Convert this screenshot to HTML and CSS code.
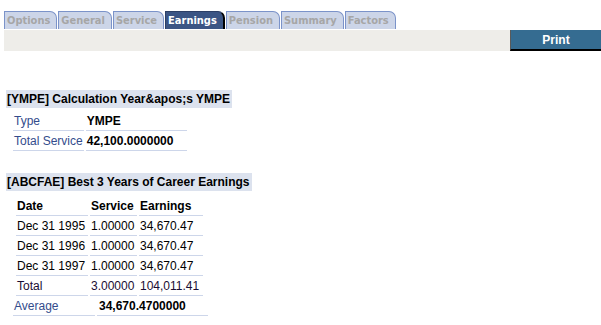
FILE: index.html
```html
<!DOCTYPE html>
<html lang="en">
<head>
    <meta name="viewport" content="width=device-width, initial-scale=1">
    <title>Earnings</title>
    <link rel="stylesheet" href="styles.css">
</head>
<body>

<div class="tabs">
    <span class="tab">Options</span>
    <span class="tab">General</span>
    <span class="tab">Service</span>
    <span class="tab active">Earnings</span>
    <span class="tab">Pension</span>
    <span class="tab">Summary</span>
    <span class="tab">Factors</span>
</div>

<div class="toolbar">
    <button class="print">Print</button>
</div>

<div class="content">
    <div class="section">
        <div class="section-title">[YMPE] Calculation Year&amp;apos;s YMPE</div>
        <table class="info">
            <tr><td class="label">Type</td><td class="value">YMPE</td></tr>
            <tr><td class="label">Total Service</td><td class="value">42,100.0000000</td></tr>
        </table>
    </div>

    <div class="section">
        <div class="section-title">[ABCFAE] Best 3 Years of Career Earnings</div>
        <table class="earnings">
            <tr class="head"><td class="c-date">Date</td><td class="c-svc">Service</td><td class="c-earn">Earnings</td></tr>
            <tr><td>Dec 31 1995</td><td>1.00000</td><td>34,670.47</td></tr>
            <tr><td>Dec 31 1996</td><td>1.00000</td><td>34,670.47</td></tr>
            <tr><td>Dec 31 1997</td><td>1.00000</td><td>34,670.47</td></tr>
            <tr class="total"><td>Total</td><td>3.00000</td><td>104,011.41</td></tr>
        </table>
        <table class="info average">
            <tr><td class="label">Average</td><td class="value">34,670.4700000</td></tr>
        </table>
    </div>
</div>

</body>
</html>
```

FILE: styles.css
```css
body {
    margin: 0;
    font-family: "Liberation Sans", Arial, sans-serif;
    font-size: 12px;
    color: #000;
    background: #fff;
}

.tabs {
    display: flex;
    gap: 1px;
    padding: 11px 0 0 4px;
    height: 29px;
    box-sizing: border-box;
    align-items: flex-end;
}

.tab {
    display: block;
    height: 18px;
    line-height: 17px;
    box-sizing: border-box;
    padding: 0 6px 0 2px;
    background-color: #ccd5e8;
    border: 1px solid #7b93c9;
    border-bottom: none;
    border-top-right-radius: 7px;
    color: #a6a6a6;
    font-family: "DejaVu Sans Condensed", "DejaVu Sans", sans-serif;
    font-weight: bold;
    font-size: 11px;
}

.tab.active {
    background-color: #3b5584;
    border-color: #2c3f66;
    border-right: 2px solid #000;
    color: #fff;
}

.toolbar {
    display: flex;
    justify-content: flex-end;
    margin: 1px 0 0 4px;
    height: 21px;
    background-color: #eeede9;
}

.print {
    width: 91px;
    height: 21px;
    box-sizing: border-box;
    padding: 0;
    background-color: #356c91;
    border: none;
    border-left: 1px solid #5a5a5a;
    border-bottom: 2px solid #000;
    color: #fff;
    font-family: "Liberation Sans", Arial, sans-serif;
    font-weight: bold;
    font-size: 12px;
}

.content {
    padding: 39px 0 0 6px;
}

.section {
    margin-bottom: 20px;
}

.section-title {
    display: inline-block;
    height: 18px;
    line-height: 18px;
    padding: 0 2px 0 1px;
    background-color: #dce2ee;
    font-weight: bold;
}

table {
    border-collapse: separate;
    border-spacing: 2px;
    font-size: 12px;
}

td {
    padding: 1px 1px 2px 1px;
    height: 14px;
    border-bottom: 1px solid #cdd6ea;
    white-space: nowrap;
}

.info {
    margin: 3px 0 0 5px;
}

.info .label {
    color: #334c8c;
    width: 68px;
}

.info .value {
    font-weight: bold;
    padding-right: 14px;
}

.earnings {
    margin: 5px 0 0 8px;
}

.earnings .head td {
    font-weight: bold;
}

.earnings .c-date {
    width: 70px;
}

.earnings .c-svc {
    width: 45px;
}

.earnings .c-earn {
    width: 62px;
}

.earnings .total td {
    color: #1a0d33;
}

.average {
    margin: -2px 0 0 5px;
}

.average .label {
    width: 80px;
}

.average .value {
    width: 95px;
    padding-left: 2px;
}
```
